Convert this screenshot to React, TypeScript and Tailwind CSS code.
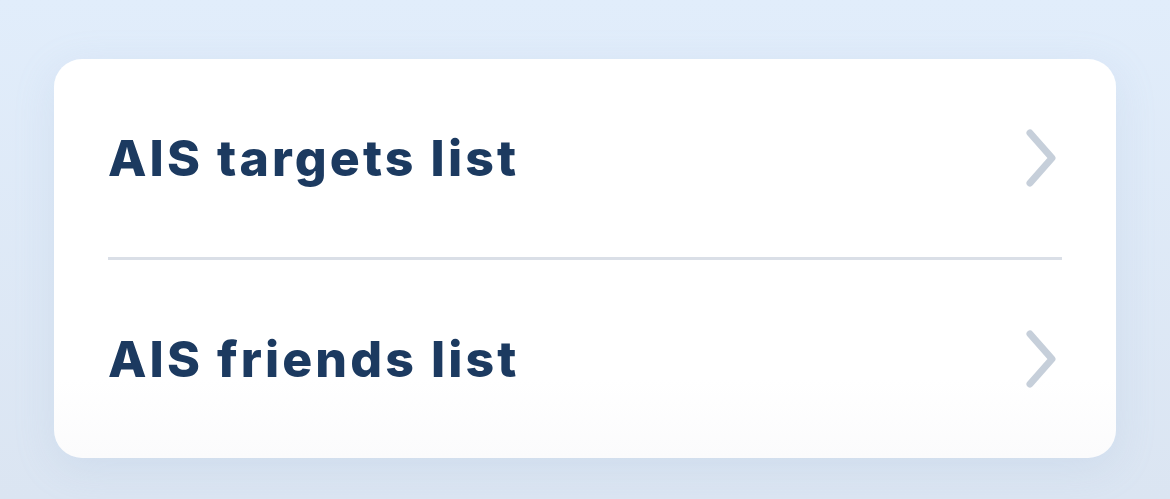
import React from "react";

function Chevron() {
  return (
    <svg width="40" height="60" viewBox="0 0 40 60" fill="none" className="shrink-0">
      <path d="M8 5 L30 30 L8 55" stroke="#c6cfda" strokeWidth="7" strokeLinecap="round" strokeLinejoin="round" />
    </svg>
  );
}

function Row({ label }: { label: string }) {
  return (
    <div className="flex h-[198px] items-center justify-between pl-[54px] pr-[54px]">
      <span
        className="text-[50px] font-extrabold leading-none text-[#1c3a60] tracking-[3.1px]"
        style={{ fontFamily: "Inter, sans-serif" }}
      >
        {label}
      </span>
      <Chevron />
    </div>
  );
}

export default function App() {
  return (
    <div className="flex h-[499px] w-[1170px] items-start justify-center bg-gradient-to-b from-[#e1edfb] to-[#dbe5f2] pt-[59px]">
      <div className="w-[1062px] h-[399px] rounded-[28px] bg-gradient-to-b from-white via-white via-80% to-[#fbfbfc] shadow-[0_10px_40px_rgba(150,175,210,0.18)]">
        <Row label="AIS targets list" />
        <div className="mx-[54px] h-[3px] bg-[#dadfe7]" />
        <Row label="AIS friends list" />
      </div>
    </div>
  );
}
